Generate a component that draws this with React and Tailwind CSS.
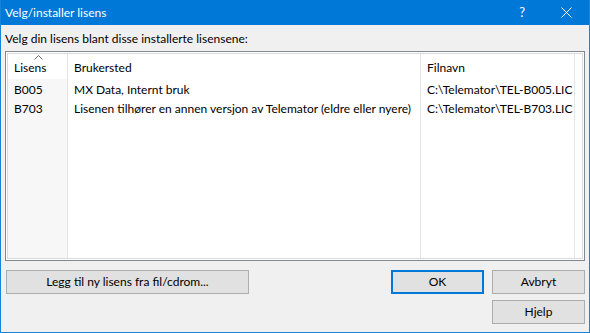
import React from 'react';

const rows = [
  { lic: 'B005', site: 'MX Data, Internt bruk', file: 'C:\\Telemator\\TEL-B005.LIC' },
  { lic: 'B703', site: 'Lisenen tilhører en annen versjon av Telemator (eldre eller nyere)', file: 'C:\\Telemator\\TEL-B703.LIC' },
];

const font = { fontFamily: 'Lato, "Noto Sans", sans-serif' };

const Button = ({ children, primary, className = '' }) => (
  <button
    className={`h-[24px] bg-[#e1e1e1] text-[12px] text-black ${
      primary ? 'border-2 border-[#0078d7]' : 'border border-[#adadad]'
    } ${className}`}
  >
    {children}
  </button>
);

export default function App() {
  return (
    <div
      className="w-[590px] h-[333px] flex flex-col border-x border-b border-[#1883d7] bg-[#f0f0f0] text-black"
      style={font}
    >
      {/* title bar */}
      <div className="h-[25px] bg-[#0078d7] flex items-center text-white shrink-0">
        <span className="pl-[4px] text-[12px]">Velg/installer lisens</span>
        <span className="ml-auto mr-[36px] text-[13px] leading-none">?</span>
        <svg width="11" height="11" viewBox="0 0 11 11" className="mr-[17px]">
          <path d="M0.5 0.5 L10.5 10.5 M10.5 0.5 L0.5 10.5" stroke="white" strokeWidth="1" />
        </svg>
      </div>

      <div className="flex-1 flex flex-col px-[4px]">
        <div className="h-[26px] flex items-center pt-[2px] text-[12px]">
          Velg din lisens blant disse installerte lisensene:
        </div>

        {/* list view */}
        <div className="h-[210px] border border-[#828790] bg-white p-px">
          <div className="h-full border border-[#dadada] flex text-[12px]">
            <div className="w-[59px] flex flex-col">
              <div className="h-[25px] bg-white relative flex items-center pl-[6px] pt-[3px]">
                <svg width="9" height="5" viewBox="0 0 9 5" className="absolute left-[26px] top-[1px]">
                  <path d="M0.5 4.5 L4.5 0.5 L8.5 4.5" stroke="#6b6b6b" fill="none" strokeWidth="1" />
                </svg>
                Lisens
              </div>
              <div className="flex-1 bg-[#f7f7f7] pt-[1px]">
                {rows.map((r) => (
                  <div key={r.lic} className="h-[19px] flex items-center pl-[6px]">
                    {r.lic}
                  </div>
                ))}
              </div>
            </div>
            <div className="w-[353px] border-l border-[#e5e5e5] flex flex-col">
              <div className="h-[25px] flex items-center pl-[6px] pt-[3px]">Brukersted</div>
              <div className="pt-[1px]">
                {rows.map((r) => (
                  <div key={r.lic} className="h-[19px] flex items-center pl-[6px] whitespace-nowrap">
                    {r.site}
                  </div>
                ))}
              </div>
            </div>
            <div className="w-[154px] border-l border-[#e5e5e5] flex flex-col">
              <div className="h-[25px] flex items-center pl-[6px] pt-[3px]">Filnavn</div>
              <div className="pt-[1px]">
                {rows.map((r) => (
                  <div key={r.lic} className="h-[19px] flex items-center pl-[6px] whitespace-nowrap">
                    {r.file}
                  </div>
                ))}
              </div>
            </div>
            <div className="flex-1 border-l border-[#e5e5e5]" />
          </div>
        </div>

        {/* buttons */}
        <div className="mt-[9px] flex items-start">
          <Button className="w-[243px] ml-px">Legg til ny lisens fra fil/cdrom...</Button>
          <div className="ml-auto flex flex-col gap-[6px] items-end">
            <div className="flex gap-[8px]">
              <Button primary className="w-[93px]">OK</Button>
              <Button className="w-[93px]">Avbryt</Button>
            </div>
            <Button className="w-[93px]">Hjelp</Button>
          </div>
        </div>
      </div>
    </div>
  );
}
